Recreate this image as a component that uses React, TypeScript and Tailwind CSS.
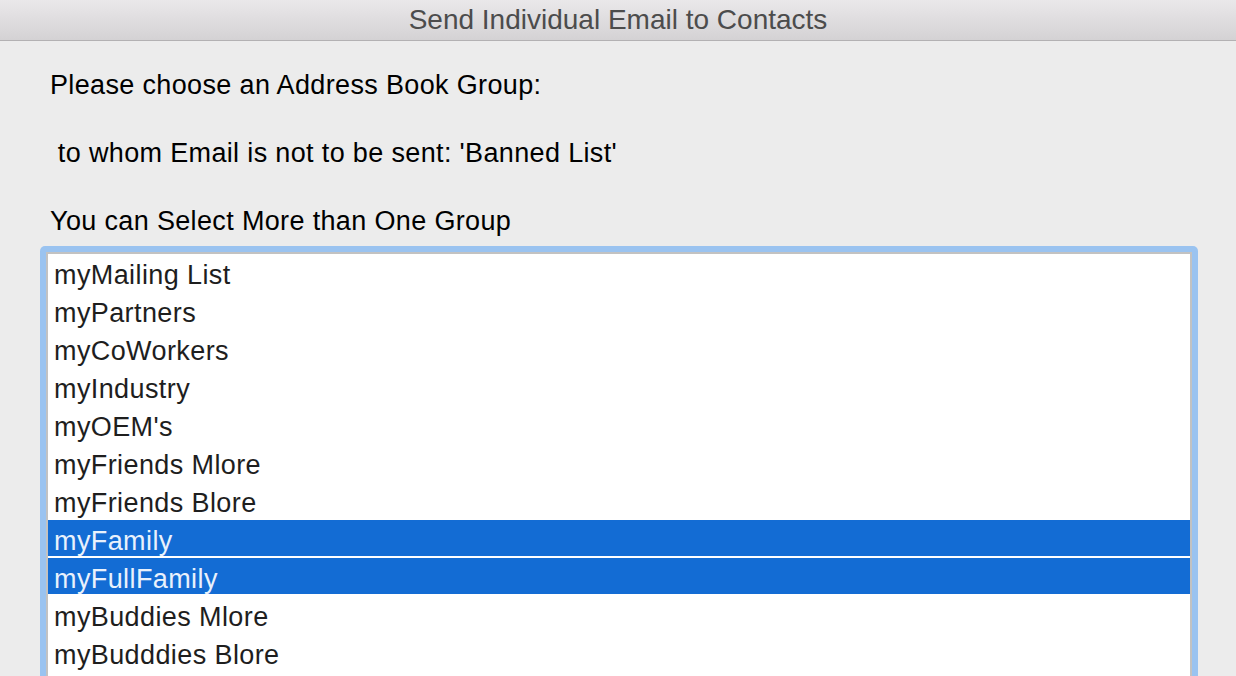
const groups = [
  { name: "myMailing List", selected: false },
  { name: "myPartners", selected: false },
  { name: "myCoWorkers", selected: false },
  { name: "myIndustry", selected: false },
  { name: "myOEM's", selected: false },
  { name: "myFriends Mlore", selected: false },
  { name: "myFriends Blore", selected: false },
  { name: "myFamily", selected: true },
  { name: "myFullFamily", selected: true },
  { name: "myBuddies Mlore", selected: false },
  { name: "myBudddies Blore", selected: false },
];

export default function App() {
  return (
    <div className="h-[676px] w-[1236px] overflow-hidden bg-[#ececec] font-['Liberation_Sans',Arial,sans-serif]">
      {/* Window title bar */}
      <div className="flex h-[41px] items-center justify-center border-b border-[#b3b1b3] bg-gradient-to-b from-[#eae8ea] to-[#d4d2d4]">
        <span className="text-[28px] text-[#4c4c4c]">Send Individual Email to Contacts</span>
      </div>

      <div className="px-[50px] pt-[27px]">
        <div className="flex flex-col gap-[34px] text-[27px] tracking-[0.35px] text-black">
          <p className="h-[34px] leading-[34px]">Please choose an Address Book Group:</p>
          <p className="h-[34px] whitespace-pre leading-[34px]"> to whom Email is not to be sent: 'Banned List'</p>
          <p className="h-[34px] leading-[34px]">You can Select More than One Group</p>
        </div>
      </div>

      {/* Group list with focus ring */}
      <div className="ml-[40px] mt-[8px] w-[1158px] rounded-t-[5px] bg-[#9ac3f0] px-[6px] pt-[6px]">
        <div className="h-[440px] border-2 border-b-0 border-[#c2c2c2] bg-white">
          {groups.map((g) => (
            <div key={g.name} className="h-[38px]">
              <div
                className={
                  g.selected
                    ? "h-[36px] bg-[#136cd4] pl-[6px] text-[27px] leading-[42px] tracking-[0.4px] text-[#e9f1fc]"
                    : "h-[36px] pl-[6px] text-[27px] leading-[42px] tracking-[0.4px] text-[#1e1e1e]"
                }
              >
                {g.name}
              </div>
            </div>
          ))}
        </div>
      </div>
    </div>
  );
}
